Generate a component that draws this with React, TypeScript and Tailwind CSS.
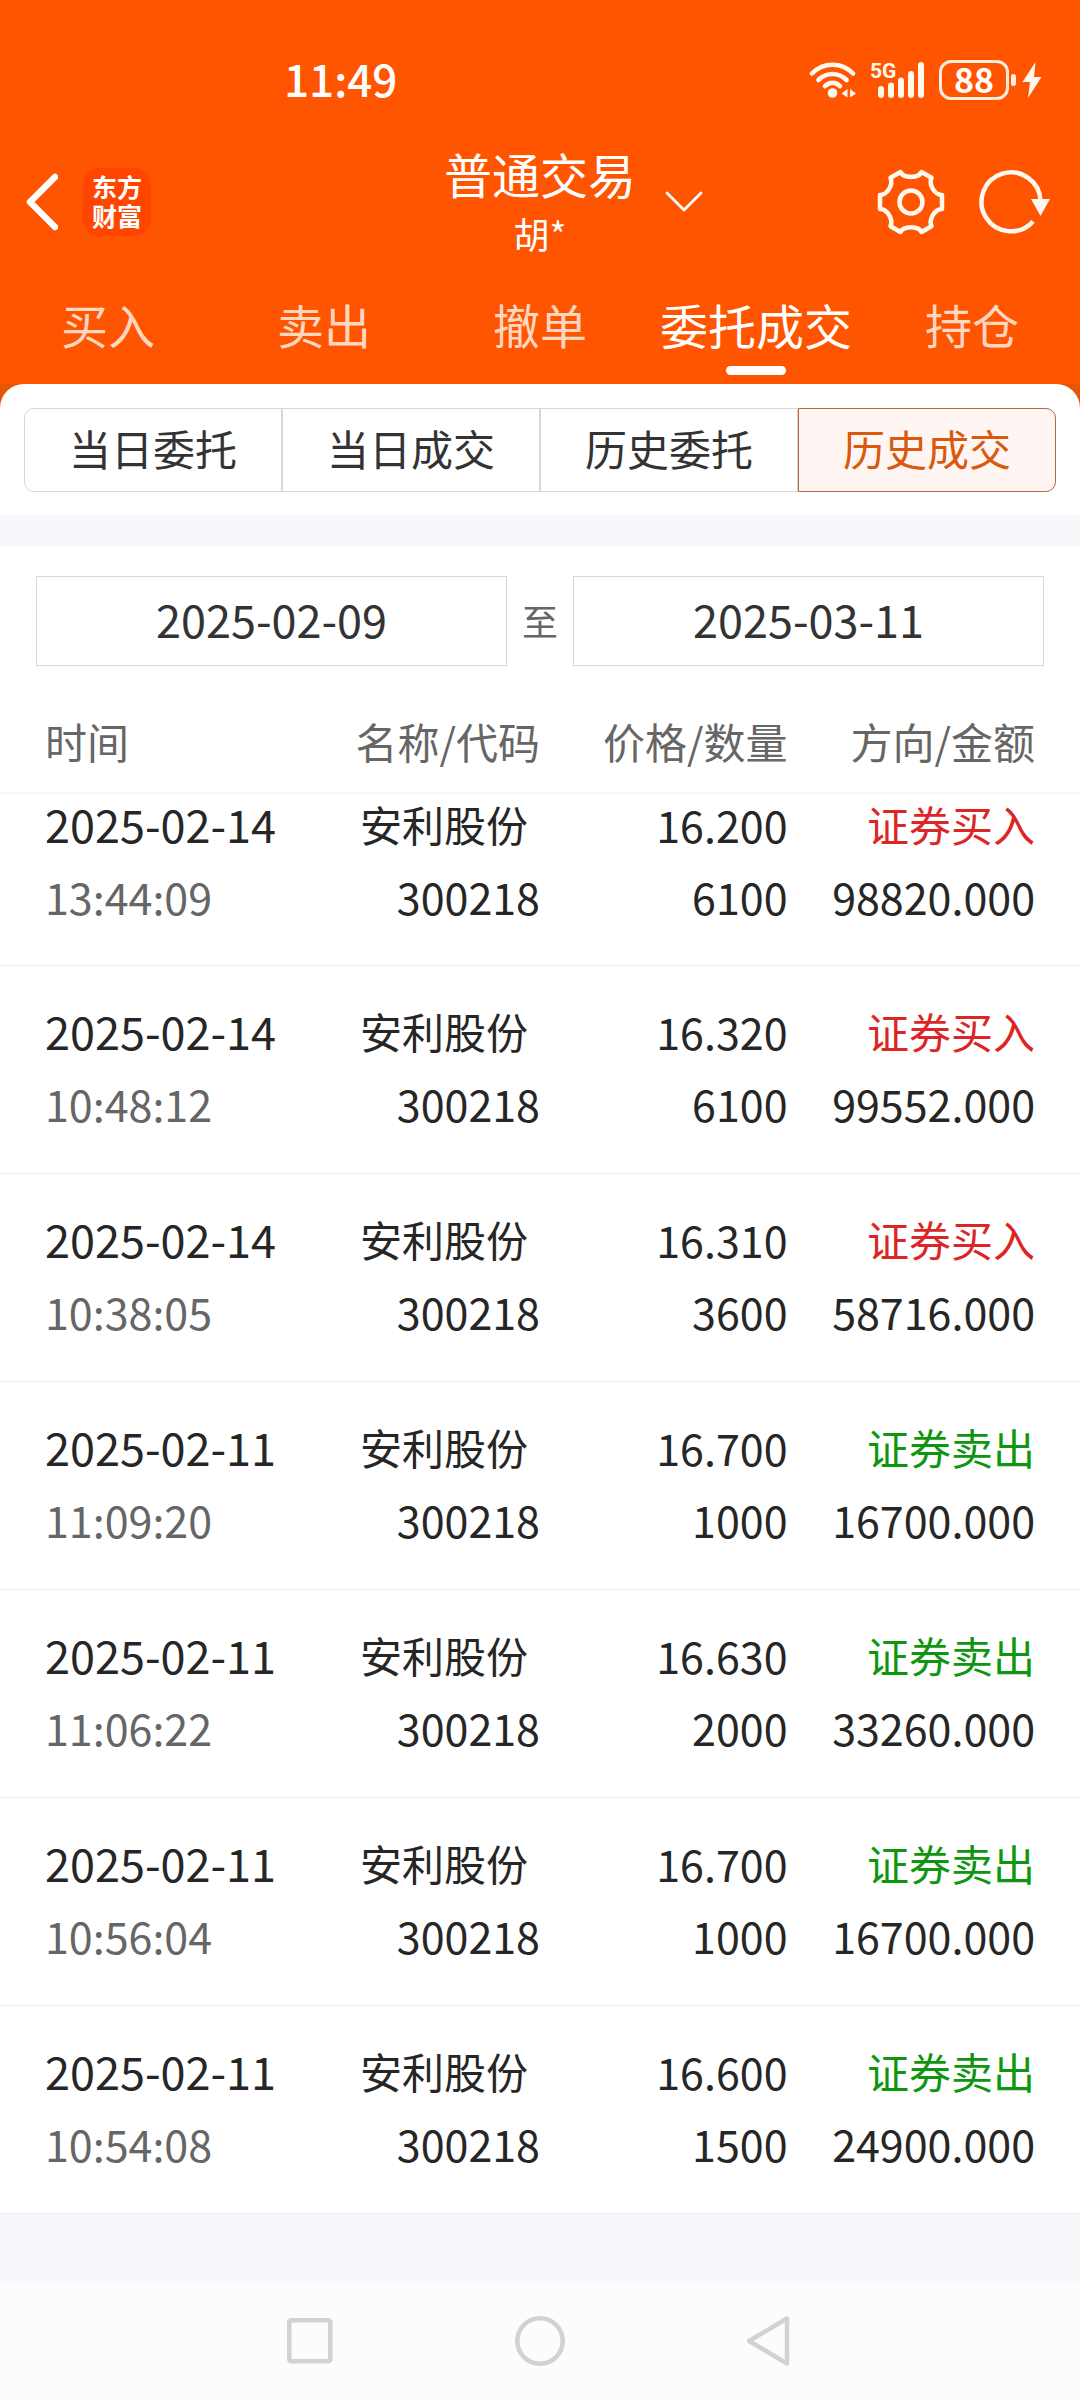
import React, { useState } from "react";

type Trade = {
  date: string;
  time: string;
  name: string;
  code: string;
  price: string;
  qty: string;
  side: "buy" | "sell";
  amount: string;
};

const trades: Trade[] = [
  { date: "2025-02-14", time: "13:44:09", name: "安利股份", code: "300218", price: "16.200", qty: "6100", side: "buy", amount: "98820.000" },
  { date: "2025-02-14", time: "10:48:12", name: "安利股份", code: "300218", price: "16.320", qty: "6100", side: "buy", amount: "99552.000" },
  { date: "2025-02-14", time: "10:38:05", name: "安利股份", code: "300218", price: "16.310", qty: "3600", side: "buy", amount: "58716.000" },
  { date: "2025-02-11", time: "11:09:20", name: "安利股份", code: "300218", price: "16.700", qty: "1000", side: "sell", amount: "16700.000" },
  { date: "2025-02-11", time: "11:06:22", name: "安利股份", code: "300218", price: "16.630", qty: "2000", side: "sell", amount: "33260.000" },
  { date: "2025-02-11", time: "10:56:04", name: "安利股份", code: "300218", price: "16.700", qty: "1000", side: "sell", amount: "16700.000" },
  { date: "2025-02-11", time: "10:54:08", name: "安利股份", code: "300218", price: "16.600", qty: "1500", side: "sell", amount: "24900.000" },
];

const tabs = ["买入", "卖出", "撤单", "委托成交", "持仓"];
const segments = ["当日委托", "当日成交", "历史委托", "历史成交"];
const columns = ["时间", "名称/代码", "价格/数量", "方向/金额"];

function StatusBar() {
  return (
    <div className="flex h-[120px] items-center justify-between pt-10 pr-[38px] pl-[284px] text-white">
      <span className="pb-1 text-[44px] leading-[48px] font-medium">11:49</span>
      <div className="flex items-center">
        <svg width="48" height="38" viewBox="0 0 48 38" fill="none" aria-hidden="true">
          <g stroke="#fff8ee" strokeWidth="4.6" strokeLinecap="round">
            <path d="M3 12.5C14.5 0.8 32.5 0.8 44 12.5" />
            <path d="M9.5 19C17.5 11 29.5 11 37.5 19" />
            <path d="M16 25.2C20.5 20.8 26.5 20.8 31 25.2" />
          </g>
          <circle cx="23.5" cy="32" r="4.8" fill="#fff8ee" />
          <path d="M38.5 28v8.500L32.500 32.500ZM41 28v8.500L47 32.500Z" fill="#fff8ee" />
        </svg>
        <svg className="ml-[14px] overflow-visible" width="54" height="38" viewBox="0 0 54 38" aria-hidden="true">
          <text x="-1" y="17" fontSize="21" fontWeight="700" fill="#fff8ee" className="font-['Roboto',sans-serif]">5G</text>
          <g fill="#fff8ee">
            <rect x="7" y="25" width="6" height="12" rx="3" />
            <rect x="17" y="21.500" width="6" height="15.500" rx="3" />
            <rect x="27" y="16.500" width="6" height="20.500" rx="3" />
            <rect x="37" y="10" width="6" height="27" rx="3" />
            <rect x="47" y="1" width="6" height="36" rx="3" />
          </g>
        </svg>
        <div className="ml-[14px] flex h-10 w-[70px] items-center justify-center rounded-xl border-[3px] border-[#ffeedd] pb-[3px] text-[34px] leading-[34px] font-bold">
          88
        </div>
        <div className="ml-[2px] h-3 w-[5px] rounded-sm bg-[#ffeedd]" />
        <svg className="ml-[6px]" width="20" height="38" viewBox="0 0 20 38" aria-hidden="true">
          <path d="M13.500 1L0.500 21H8L6 37L19.500 16H12Z" fill="#fff8ee" />
        </svg>
      </div>
    </div>
  );
}

function TitleBar() {
  return (
    <div className="grid h-[164px] grid-cols-[1fr_auto_1fr] items-center text-white">
      <div className="flex items-center pl-6">
        <button type="button" aria-label="返回">
          <svg width="34" height="58" viewBox="0 0 34 58" fill="none" stroke="#fff" strokeWidth="6.500">
            <path d="M31 4L6 29L31 54" strokeLinecap="round" strokeLinejoin="round" />
          </svg>
        </button>
        <div className="ml-[25px] flex h-[68px] w-[68px] items-center justify-center rounded-2xl bg-[#ff4500] pb-[2px] text-center text-[25px] leading-[29px] font-bold">
          <p>
            东方
            <br />
            财富
          </p>
        </div>
      </div>
      <div className="flex flex-col items-center pt-1">
        <h1 className="text-[48px] leading-[58px]">普通交易</h1>
        <p className="text-[36px] leading-[62px]">胡*</p>
      </div>
      <div className="flex items-center pr-[29px] pl-7">
        <button type="button" aria-label="切换账户">
          <svg width="40" height="24" viewBox="0 0 40 24" fill="none" stroke="#fff" strokeWidth="2.800">
            <path d="M3 3L20 20L37 3" strokeLinecap="round" strokeLinejoin="round" />
          </svg>
        </button>
        <button type="button" aria-label="设置" className="ml-auto">
          <svg width="68" height="68" viewBox="0 0 68 68" fill="none" stroke="#fff8ee" strokeWidth="4.500">
            <path
              d="M23.500 4C26.500 10.500 41.500 10.500 44.500 4L54.500 9.800C51.500 17 58 27 65 27V41C58 41 51.500 51 54.500 58.200L44.500 64C41.500 57.500 26.500 57.500 23.500 64L13.500 58.200C16.500 51 10 41 3 41V27C10 27 16.500 17 13.500 9.800Z"
              strokeLinejoin="round"
            />
            <circle cx="34" cy="34" r="11.500" />
          </svg>
        </button>
        <button type="button" aria-label="刷新" className="ml-[34px]">
          <svg width="72" height="68" viewBox="0 0 72 68" fill="none">
            <path d="M54 53.500A29.500 29.500 0 1 1 61.500 33" stroke="#fff8ee" strokeWidth="4.500" />
            <path d="M52 31H71L61.500 48Z" fill="#fff8ee" />
          </svg>
        </button>
      </div>
    </div>
  );
}

function SideLabel({ side }: { side: Trade["side"] }) {
  return side === "buy" ? (
    <span className="text-[#dc2626]">证券买入</span>
  ) : (
    <span className="text-[#0f960f]">证券卖出</span>
  );
}

export default function App() {
  const [tab, setTab] = useState("委托成交");
  const [segment, setSegment] = useState("历史成交");
  const [from, setFrom] = useState("2025-02-09");
  const [to, setTo] = useState("2025-03-11");

  return (
    <div className="flex min-h-screen flex-col bg-[#f6f8fb] font-['Noto_Sans_CJK_SC',sans-serif]">
      <header className="bg-[#ff5500]">
        <StatusBar />
        <TitleBar />
        <nav className="grid h-[100px] grid-cols-5">
          {tabs.map((t) => (
            <button
              key={t}
              type="button"
              onClick={() => setTab(t)}
              className={
                t === tab
                  ? "relative pb-5 text-[48px] leading-[64px] whitespace-nowrap text-white"
                  : "relative pb-5 text-[47px] leading-[64px] whitespace-nowrap text-[#ffd6c0]"
              }
            >
              {t}
              {t === tab && <span className="absolute bottom-[9px] left-1/2 h-[9px] w-[60px] -translate-x-1/2 rounded-full bg-white" />}
            </button>
          ))}
        </nav>
      </header>

      <main>
        <div className="bg-[#e65505]">
          <div className="rounded-t-3xl bg-white px-6 pt-6 pb-[23px]">
            <div className="grid h-[84px] grid-cols-4">
              {segments.map((s) => (
                <button
                  key={s}
                  type="button"
                  onClick={() => setSegment(s)}
                  className={
                    s === segment
                      ? "border border-[#b56a3f] bg-[#fff6f3] pb-1 text-[42px] leading-[60px] text-[#d9590f] first:rounded-l-[10px] last:rounded-r-[10px]"
                      : "border border-[#d5d8d9] pb-1 text-[42px] leading-[60px] text-[#333333] first:rounded-l-[10px] last:rounded-r-[10px]"
                  }
                >
                  {s}
                </button>
              ))}
            </div>
          </div>
        </div>

        <div className="mt-[31px] flex items-center bg-white px-9 pt-[30px] pb-6">
          <input
            type="text"
            aria-label="开始日期"
            value={from}
            onChange={(e) => setFrom(e.target.value)}
            className="h-[90px] min-w-0 flex-1 border border-[#d8d8d8] pb-[6px] text-center text-[45px] text-[#333333]"
          />
          <span className="px-[15px] pb-[2px] text-[36px] leading-[48px] text-[#666666]">至</span>
          <input
            type="text"
            aria-label="结束日期"
            value={to}
            onChange={(e) => setTo(e.target.value)}
            className="h-[90px] min-w-0 flex-1 border border-[#d8d8d8] pb-[6px] text-center text-[45px] text-[#333333]"
          />
        </div>

        <table className="block bg-white text-[42px] text-[#262626]">
          <thead className="block">
            <tr className="grid grid-cols-4 border-b-[3px] border-[#f6f8fa] px-[45px] pt-[21px] pb-[21px] text-[#666666]">
              {columns.map((c) => (
                <th key={c} scope="col" className="text-right leading-[60px] font-normal whitespace-nowrap first:text-left">
                  {c}
                </th>
              ))}
            </tr>
          </thead>
          <tbody className="block">
            {trades.map((t) => (
              <tr
                key={t.date + t.time}
                className="grid grid-cols-4 border-b border-[#ebedee] px-[45px] pt-[29px] pb-[34px] text-right leading-[72px] whitespace-nowrap first:-mt-[7px] first:pt-0 first:pb-[33px]"
              >
                <td className="flex flex-col text-left">
                  <span className="text-[45px]">{t.date}</span>
                  <span className="text-[43px] text-[#666666]">{t.time}</span>
                </td>
                <td className="flex flex-col">
                  <span className="pr-3">{t.name}</span>
                  <span className="text-[43px]">{t.code}</span>
                </td>
                <td className="flex flex-col text-[43px]">
                  <span>{t.price}</span>
                  <span>{t.qty}</span>
                </td>
                <td className="flex flex-col">
                  <SideLabel side={t.side} />
                  <span className="text-[43px]">{t.amount}</span>
                </td>
              </tr>
            ))}
          </tbody>
        </table>
      </main>

      <footer className="mt-auto flex h-[118px] justify-center bg-[#fcfcfc]">
        <div className="grid w-[64%] grid-cols-3 place-items-center">
          <button type="button" aria-label="最近任务">
            <svg width="50" height="52" viewBox="0 0 50 52" fill="none" stroke="#d2d2d2" strokeWidth="4.500">
              <rect x="4.300" y="5.300" width="41" height="41" rx="2" />
            </svg>
          </button>
          <button type="button" aria-label="主屏幕">
            <svg width="52" height="52" viewBox="0 0 52 52" fill="none" stroke="#d2d2d2" strokeWidth="4.500">
              <circle cx="26" cy="26" r="22.700" />
            </svg>
          </button>
          <button type="button" aria-label="系统返回">
            <svg width="52" height="52" viewBox="0 0 52 52" fill="none" stroke="#d2d2d2" strokeWidth="4.500" strokeLinejoin="round">
              <path d="M43 3.500V48.500L5 26Z" />
            </svg>
          </button>
        </div>
      </footer>
    </div>
  );
}
